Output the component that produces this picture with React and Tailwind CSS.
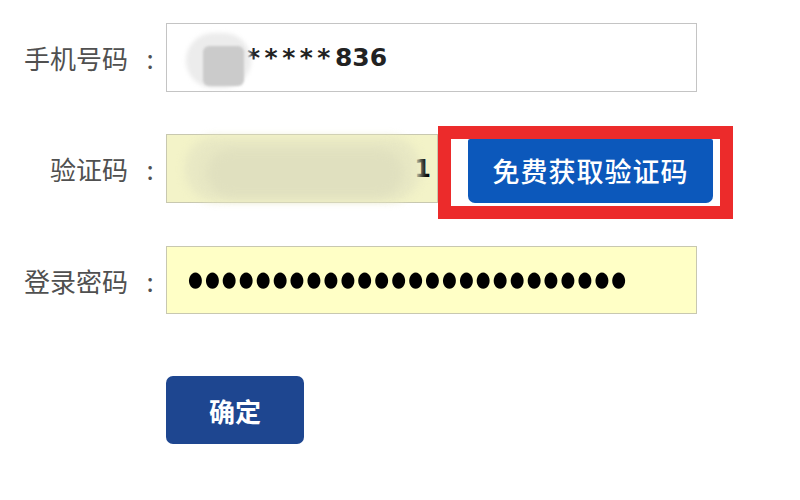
import React from 'react'

const CJK = "font-['Microsoft_YaHei','Noto_Sans_CJK_SC',sans-serif]"

function Label({ text }) {
  return (
    <div className={`w-[166px] h-full flex items-center justify-end text-[26px] text-[#505050] ${CJK}`}>
      <span>{text}</span>
      <span className="w-[38px] pl-[6px] text-center">:</span>
    </div>
  )
}

export default function App() {
  const dots = '●'.repeat(26)
  return (
    <div className="w-[800px] h-[500px] bg-white pt-[23px] overflow-hidden">
      {/* phone */}
      <div className="flex h-[69px]">
        <Label text="手机号码" />
        <div className="relative w-[531px] h-full border border-[#c4c4c4] bg-white flex items-center pl-[80px] font-['DejaVu_Sans',sans-serif] font-bold text-[25px] text-[#222]">
          <span className="tracking-[4.5px]">*****</span>
          <span>836</span>
          {/* blurred part */}
          <div className="absolute left-[19px] top-[9px] w-[65px] h-[55px] rounded-full bg-[#ececec] blur-[2px]" />
          <div className="absolute left-[36px] top-[22px] w-[41px] h-[40px] rounded-[6px] bg-[#cbcbcb] blur-[1px]" />
        </div>
      </div>

      {/* code */}
      <div className="flex h-[93px] mt-[34px]">
        <div className="flex h-[69px] mt-[8px]">
          <Label text="验证码" />
          <div className="relative w-[272px] h-full border border-[#c8c8b0] bg-[#f3f3c8] flex items-center justify-end pr-[6px]">
            <span className="font-['DejaVu_Sans',sans-serif] font-bold text-[24px] text-black">1</span>
            <div className="absolute left-[18px] top-[2px] w-[236px] h-[64px] rounded-[30px] bg-[#e8e8c4] blur-[4px]" />
            <div className="absolute left-[40px] top-[14px] w-[196px] h-[48px] rounded-[26px] bg-[#e0e0bf] blur-[5px]" />
          </div>
        </div>
        <div className="w-[295px] h-[93px] border-[13px] border-[#ec2b2b] bg-white pl-[17px] pr-[7px] pb-[3px]">
          <button className={`w-full h-full bg-[#0c58bb] rounded-b-[7px] rounded-t-[2px] text-white text-[27px] font-medium tracking-[1px] ${CJK}`}>
            免费获取验证码
          </button>
        </div>
      </div>

      {/* password */}
      <div className="flex h-[68px] mt-[27px]">
        <Label text="登录密码" />
        <div className="w-[531px] h-full border border-[#c8c8b0] bg-[#ffffc6] flex items-center pl-[21px]">
          <span className="font-['DejaVu_Sans',sans-serif] text-[17px] text-black tracking-[2.1px] scale-y-[1.25]">{dots}</span>
        </div>
      </div>

      {/* submit */}
      <div className="pl-[166px] mt-[62px]">
        <button className={`w-[138px] h-[68px] bg-[#1e4690] rounded-[7px] text-white text-[26px] font-bold ${CJK}`}>
          确定
        </button>
      </div>
    </div>
  )
}
